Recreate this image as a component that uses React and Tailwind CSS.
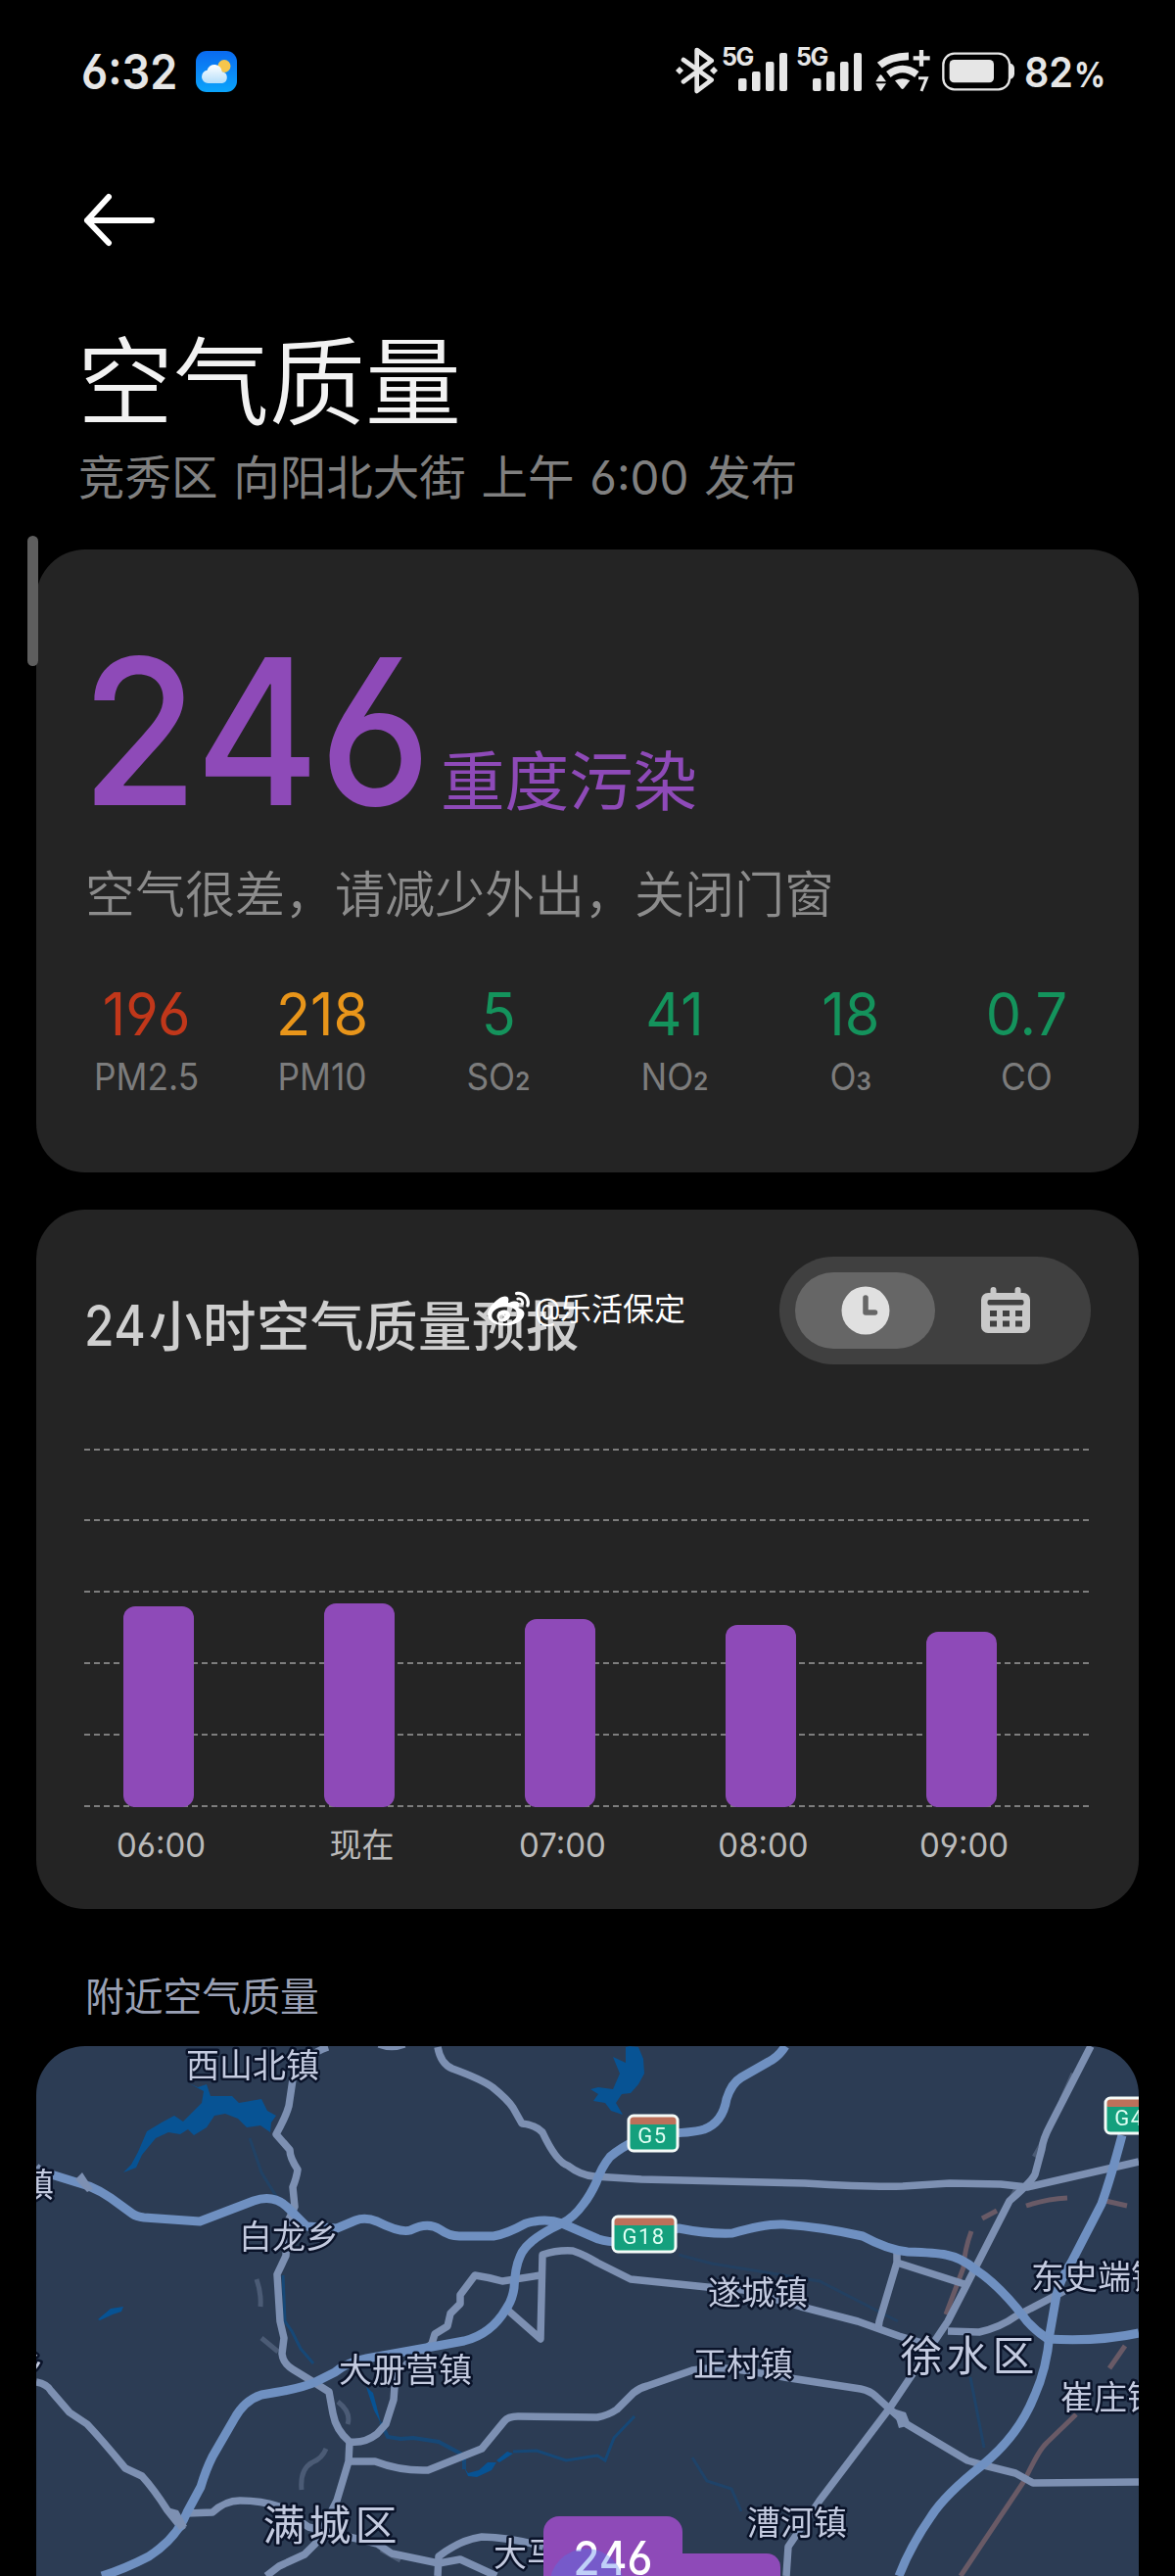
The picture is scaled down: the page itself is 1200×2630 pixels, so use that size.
import { FaWeibo } from "react-icons/fa";

const pollutants = [
  { value: "196", name: "PM2.5", color: "text-[#c1371a]" },
  { value: "218", name: "PM10", color: "text-[#e8951a]" },
  { value: "5", name: "SO", sub: "2", color: "text-[#14935c]" },
  { value: "41", name: "NO", sub: "2", color: "text-[#14935c]" },
  { value: "18", name: "O", sub: "3", color: "text-[#14935c]" },
  { value: "0.7", name: "CO", color: "text-[#14935c]" },
];

const forecast = [
  { time: "06:00", height: 205 },
  { time: "现在", height: 208 },
  { time: "07:00", height: 192 },
  { time: "08:00", height: 186 },
  { time: "09:00", height: 179 },
];

const gridLines = [1, 73, 146, 219, 292, 365];

// main and county roads
const roads = [
  "M298 1 Q275 8 262 34 L258 61 Q255 72 245 90 L259 106 Q259 114 267 126 Q266 134 262 144 L264 164 L256 181 L255 214 L246 233 L249 281 L253 298 L251 314 Q252 324 262 330 L280 341 L299 353 L303 375 Q306 392 320 404 Q335 406 348 396 L357 386 L365 361 L367 334 L404 304 L407 294 L420 286 L423 273 L433 263 L433 254 L448 234 Q462 236 476 240 L515 234",
  "M481 269 L515 299 L517 213 Q532 208 548 209 Q560 213 573 221 L607 238 L685 246 L722 249 L781 266 L839 281 L881 296 L915 306",
  "M320 404 L319 424 L307 464 L285 508 L274 519 L248 531 L235 541",
  "M319 424 L346 424 Q372 434 400 433 L455 411 L478 383 Q482 378 492 378 L573 379 Q584 377 593 371 L610 354 Q616 349 624 347 L670 331 Q696 326 722 331 L770 339 L842 350 Q852 352 858 358 L870 369 L889 386 L951 423 L968 428 L1000 436 L1018 446 L1126 445",
  "M410 1 Q413 18 425 23 Q455 34 466 42 Q482 55 487 63 L496 79 Q509 80 517 88 Q531 118 543 122 Q556 132 570 133 L618 136 L785 140 Q850 144 885 143 L933 140 L985 141 L1012 144 L1126 118",
  "M1077 0 L1036 80 Q1028 95 1027 105 L1020 131 Q1016 139 994 158 L948 248 L931 281 L872 369 L800 464 L768 511 L766 541",
  "M879 208 L879 221 L861 281 L860 288",
  "M879 221 L948 243",
  "M931 291 L963 292 Q985 287 1000 276 L1050 250",
  "M0 343 Q11 345 15 352 L34 374 L52 386 Q68 403 91 431 L108 439 Q120 452 134 474 L150 494",
  "M154 477 L180 476 Q193 464 208 464 Q230 464 248 470 L278 491 L348 508 L363 518 L411 528 L433 524 L470 541",
  "M410 541 L411 521 Q433 504 455 501 Q487 502 518 511",
  "M0 123 L10 133 M350 -2 Q363 3 376 -2",
];

const motorways = [
  "M12 130 L54 143 Q66 148 76 155 L98 171 Q102 174 110 175 L167 179 L222 158 Q242 151 256 164 L276 184 L307 186 L326 178 Q336 174 348 179 Q372 191 382 188 Q400 179 412 187 Q422 194 432 194 L467 194 Q480 192 500 181 Q520 175 537 181 L574 197 Q590 202 615 199 L656 186 Q686 192 711 191 Q745 181 763 182 Q805 185 844 194 Q870 208 890 210 Q920 211 929 213 Q945 216 959 228 Q985 245 1012 281 Q1021 291 1033 299 Q1085 302 1126 293",
  "M765 0 Q758 11 748 16 L720 32 Q710 38 705 54 Q701 78 682 85 Q668 89 640 89 Q610 93 586 113 Q577 124 572 139 Q566 152 559 161 Q549 175 537 181 Q500 198 494 215 Q489 226 488 247 Q486 260 480 268 Q465 294 437 301 L404 307 L337 319 Q317 323 305 333 L285 343 Q270 350 230 356 Q212 362 202 381 L180 419 Q173 433 168 450 L154 476 Q144 502 115 521 Q90 534 67 541",
  "M1109 91 Q1097 136 1088 161 L1057 221 Q1045 240 1042 254 L1035 294 Q1032 330 1019 358 Q1003 398 966 428 Q928 458 914 480 Q893 510 881 541",
];

const waters = [
  "M156 38 L165 42 L174 39 L178 51 L200 51 L207 58 L230 54 L236 66 L245 71 L240 78 L239 88 L229 81 L215 83 L206 74 L193 69 L182 71 L174 83 L161 91 L155 85 L147 90 L135 88 L122 94 L108 111 L102 124 L89 129 L97 121 L104 108 L113 87 L128 78 L141 71 L150 77 L169 58 L171 46 Z",
  "M602 1 L606 0 L615 1 L620 13 L621 28 L615 39 L607 48 L598 49 L592 58 L599 70 L587 66 L581 58 L569 56 L574 49 L566 44 L574 42 L589 44 L596 28 L589 11 L602 17 Z",
  "M63 279 L76 268 L89 266 L87 271 L78 274 L65 280 Z",
  "M337 348 L344 354 L352 385 L345 372 Z",
  "M437 430 L441 436 L452 433 L461 425 L470 425 L465 433 L450 440 L441 439 Z M470 423 L481 414 L487 416 L473 425 Z",
];

const places = [
  { name: "西山北镇", x: 221, y: 32, anchor: "middle" },
  { name: "镇", x: 1, y: 154, anchor: "middle" },
  { name: "白龙乡", x: 258, y: 207, anchor: "middle" },
  { name: "遂城镇", x: 737, y: 264, anchor: "middle" },
  { name: "东史端镇", x: 1016, y: 248, anchor: "start" },
  { name: "大册营镇", x: 377, y: 343, anchor: "middle" },
  { name: "正村镇", x: 722, y: 337, anchor: "middle" },
  { name: "崔庄镇", x: 1046, y: 371, anchor: "start" },
  { name: "乡", x: -9, y: 338, anchor: "middle" },
  { name: "大马", x: 467, y: 531, anchor: "start" },
  { name: "漕河镇", x: 777, y: 499, anchor: "middle" },
];

const districts = [
  { name: "徐水区", x: 953, y: 332 },
  { name: "满城区", x: 302, y: 505 },
];

const shields = [
  { name: "G5", x: 605, y: 71, w: 50 },
  { name: "G18", x: 589, y: 174, w: 64 },
  { name: "G4", x: 1092, y: 53, w: 50 },
];

function WeatherIcon() {
  return (
    <svg width="42" height="42" viewBox="0 0 42 42">
      <defs>
        <linearGradient id="sky" x1="0" y1="0" x2="0" y2="1">
          <stop offset="0" stopColor="#0a6af0" />
          <stop offset="1" stopColor="#0aa4fb" />
        </linearGradient>
        <linearGradient id="cloud" x1="0" y1="0" x2="0" y2="1">
          <stop offset="0" stopColor="#fff" />
          <stop offset="1" stopColor="#b4defa" />
        </linearGradient>
      </defs>
      <rect width="42" height="42" rx="11" fill="url(#sky)" />
      <circle cx="29" cy="15.500" r="6.500" fill="#f6c64c" />
      <path
        d="M12.500 33a6.700 6.700 0 0 1-1-13.300 7.800 7.800 0 0 1 15.300 1.500A6 6 0 0 1 27 33z"
        fill="url(#cloud)"
      />
    </svg>
  );
}

function BluetoothIcon() {
  return (
    <svg width="43" height="48" viewBox="58 56 129 144" fill="none">
      <path
        d="M82 95L168 157L123 191V65L168 98L82 162"
        stroke="#e6e6e6"
        strokeWidth="14"
        strokeLinecap="round"
        strokeLinejoin="round"
      />
      <path d="M70 116l12 12-12 12-12-12zM175 116l12 12-12 12-12-12z" fill="#e6e6e6" />
    </svg>
  );
}

function Signal() {
  return (
    <div className="flex h-[45px] w-[67px]">
      <span className="w-[17px] text-[25px] leading-[20px] font-bold tracking-[-1.500px]">5G</span>
      <svg width="50" height="45" viewBox="0 0 50 45" fill="#e6e6e6">
        <rect x="0" y="32" width="8.500" height="13" rx="2" />
        <rect x="14" y="25" width="8.500" height="20" rx="2" />
        <rect x="28" y="15" width="8.500" height="30" rx="2" />
        <rect x="42" y="6" width="8" height="39" rx="2" />
      </svg>
    </div>
  );
}

function WifiIcon() {
  return (
    <svg width="56" height="44" viewBox="671 60 168 132" fill="#e6e6e6">
      <path d="M684 110Q716 83 773 82" fill="none" stroke="#e6e6e6" strokeWidth="23" />
      <path d="M711 138Q754 105 798 138" fill="none" stroke="#e6e6e6" strokeWidth="22" />
      <path d="M731 157Q754 144 777 157L758 181Q754 185 750 181Z" />
      <path d="M672 160L684 140Q687 137 690 140L704 160ZM672 166H704L690 186Q687 190 684 186Z" />
      <path d="M812 63V113M787 88H838" stroke="#e6e6e6" strokeWidth="13" />
      <path d="M803 149H828L812 189" fill="none" stroke="#e6e6e6" strokeWidth="9" />
    </svg>
  );
}

function BatteryIcon() {
  return (
    <svg width="74" height="40" viewBox="876 68 222 120" fill="#e6e6e6">
      <rect x="880" y="73" width="203" height="110" rx="34" fill="none" stroke="#e6e6e6" strokeWidth="7" />
      <rect x="899" y="92" width="136" height="70" rx="14" />
      <path d="M1084 103q14 2 14 16v16q0 14-14 17z" />
    </svg>
  );
}

function StatusBar() {
  return (
    <div className="flex h-[146px] justify-between pl-[83px] pr-[73px] text-[#e6e6e6]">
      <div className="flex h-[146px] items-center">
        <span className="w-[117px] origin-left scale-x-[.92] pt-[2px] text-[49px] font-semibold">6:32</span>
        <WeatherIcon />
      </div>
      <div className="flex pt-[48px]">
        <BluetoothIcon />
        <div className="ml-[4px] mr-[1px] flex gap-[9px]">
          <Signal />
          <Signal />
        </div>
        <div className="ml-[13px] mt-[2px]">
          <WifiIcon />
        </div>
        <div className="ml-[12px] mt-[5px]">
          <BatteryIcon />
        </div>
        <div className="ml-[10px] flex w-[81px] items-baseline text-[43px] leading-[50px] font-semibold">
          <span className="w-[51px] origin-left scale-x-[.92]">82</span>
          <span className="origin-left scale-x-[.88] text-[36px] font-bold">%</span>
        </div>
      </div>
    </div>
  );
}

function AirQualityCard() {
  return (
    <section className="mx-[37px] h-[636px] rounded-[50px] bg-[#242424] pt-[81px] pr-[25px] pl-[23px]">
      <div className="flex h-[206px] items-baseline pl-[23px] text-[#8e4ab8]">
        <span className="w-[367px] origin-left scale-x-[.93] text-[208px] leading-[208px] font-[450]">246</span>
        <span className="text-[65.500px] leading-[80px]">重度污染</span>
      </div>
      <p className="mt-[26px] pl-[27px] text-[51px] leading-[80px] font-[350] text-[#8c8c8c]">
        空气很差，请减少外出，关闭门窗
      </p>
      <div className="mt-[43px] grid grid-cols-6">
        {pollutants.map(({ value, name, sub, color }) => (
          <div key={name} className="flex flex-col items-center">
            <span className={`scale-x-[.96] text-[60px] leading-[76px] ${color}`}>{value}</span>
            <span className="scale-x-[.93] text-[38px] leading-[52px] text-[#7c7c7c]">
              {name}
              {sub && <span className="text-[26px] font-semibold">{sub}</span>}
            </span>
          </div>
        ))}
      </div>
    </section>
  );
}

function Toggle() {
  return (
    <div className="flex h-[110px] w-[318px] items-center rounded-full bg-[#404040] px-[16px]">
      <div className="flex h-[78px] w-[143px] items-center justify-center rounded-full bg-[#666]">
        <svg width="50" height="50" viewBox="0 0 50 50">
          <circle cx="25" cy="25" r="24.500" fill="#e0e0e0" />
          <path d="M25 12V27H34.500" fill="none" stroke="#666" strokeWidth="5.500" strokeLinecap="round" strokeLinejoin="round" />
        </svg>
      </div>
      <div className="flex h-[78px] w-[143px] items-center justify-center">
        <svg width="50" height="48" viewBox="0 0 50 48">
          <rect x="0" y="6" width="50" height="41" rx="7" fill="#c9c9c9" />
          <path d="M12.500 3V9M37.500 3V9" stroke="#c9c9c9" strokeWidth="6" strokeLinecap="round" />
          <rect x="6.500" y="13" width="37" height="5.500" rx="2" fill="#404040" />
          <path d="M9 27H16M22 27H29M35 27H42M9 37.500H16M22 37.500H29M35 37.500H42" stroke="#404040" strokeWidth="6" />
        </svg>
      </div>
    </div>
  );
}

function ForecastCard() {
  return (
    <section className="relative mx-[37px] mt-[38px] h-[714px] rounded-[50px] bg-[#242424] px-[49px] pt-[48px]">
      <div className="flex h-[110px] items-start justify-between">
        <h2 className="flex items-baseline pt-[31px] text-[54.500px] leading-[80px] font-medium tracking-[.5px] text-[#cfcfcf]">
          <span className="w-[66px] origin-left scale-x-[.87] text-[57px]">24</span>
          小时空气质量预报
        </h2>
        <Toggle />
      </div>
      <svg className="mt-[86px]" width="1028" height="368" viewBox="0 0 1028 368">
        {gridLines.map((y) => (
          <line key={y} x1="0" x2="1026" y1={y} y2={y} stroke="#7d7d7d" strokeWidth="2" strokeDasharray="6 4" />
        ))}
        {forecast.map(({ time, height }, i) => (
          <rect key={time} x={40 + i * 205} y={366 - height} width="72" height={height} rx="12" fill="#8e4ab8" />
        ))}
      </svg>
      <div className="-ml-[24px] mt-[12px] flex text-[34px] leading-[50px] text-[#bababa]">
        {forecast.map(({ time }) => (
          <span key={time} className="w-[205px] shrink-0 scale-x-[.97] text-center">
            {time}
          </span>
        ))}
      </div>
      <div className="absolute left-[461px] top-[80px] flex items-center text-[32px] leading-[44px] text-white">
        <FaWeibo size={43} />
        <span className="ml-[5px] w-[26px] origin-left scale-x-[.85]">@</span>
        乐活保定
      </div>
    </section>
  );
}

function AirMap() {
  return (
    <div className="mx-[37px] h-[541px] overflow-hidden rounded-t-[50px] bg-[#2c3c54]">
      <svg width="1126" height="541" viewBox="0 0 1126 541" fontFamily="Inter, 'Noto Sans CJK SC', sans-serif">
        <g fill="#075394">
          {waters.map((d) => (
            <path key={d} d={d} />
          ))}
        </g>
        <g fill="none" stroke="#075394" strokeWidth="3" opacity=".55">
          <path d="M252 234L254 281L261 291L270 309L283 324" />
          <path d="M352 384L359 399L372 401L385 400L411 404L437 418V432" strokeWidth="4" />
          <path d="M487 414L511 413L541 423L573 418L581 423L590 400L611 378" />
          <path d="M218 94L230 129L248 158" opacity=".5" />
          <path d="M670 420L685 444L710 452L720 475" opacity=".6" />
          <path d="M954 338L968 410" opacity=".6" />
          <path d="M656 213L690 222L800 240L880 281" opacity=".4" />
        </g>
        <g fill="none" stroke="#4b5b75" strokeWidth="5">
          <path d="M1059 28L1030 94L994 158" strokeDasharray="30 34" />
          <path d="M225 238Q230 252 229 266M230 298L247 312M308 363Q322 374 318 386M296 411Q292 421 282 425Q269 432 271 453" />
          <path d="M352 514L372 525" />
        </g>
        <g fill="none" stroke="#695a66" strokeWidth="5">
          <path d="M966 176L981 168M1011 163Q1032 156 1053 155M1092 158L1114 163" />
          <path d="M955 189Q948 208 947 226L929 274" />
          <path d="M1112 306L1096 329M1062 376L1032 405Q1024 412 1009 444L944 541" />
        </g>
        <g fill="none" stroke="#7d90b2" strokeWidth="7.500" strokeLinejoin="round">
          {roads.map((d) => (
            <path key={d} d={d} />
          ))}
        </g>
        <g fill="none" stroke="#6f90c1" strokeWidth="9" strokeLinejoin="round">
          {motorways.map((d) => (
            <path key={d} d={d} />
          ))}
        </g>
        <path d="M130 470L145 474L154 490L146 494ZM875 370L888 374L893 387L881 390ZM47 129L58 146L52 149L40 136Z" fill="#7d90b2" />
        <g fill="#c3cadf" stroke="#0a1329" strokeWidth="5" strokeLinejoin="round" paintOrder="stroke">
          {places.map(({ name, x, y, anchor }) => (
            <text key={name + x} x={x} y={y} textAnchor={anchor} fontSize="34">
              {name}
            </text>
          ))}
          {districts.map(({ name, x, y }) => (
            <text key={name} x={x} y={y} textAnchor="middle" fontSize="43" letterSpacing="4">
              {name}
            </text>
          ))}
        </g>
        {shields.map(({ name, x, y, w }) => (
          <g key={name}>
            <rect x={x} y={y} width={w} height="36" rx="5" fill="#14a07d" />
            <rect x={x} y={y} width={w} height="9" rx="3" fill="#bd705a" />
            <rect x={x} y={y} width={w} height="36" rx="5" fill="none" stroke="#f5fbf8" strokeWidth="3" />
            <text x={x + w / 2 - 0.5} y={y + 28} textAnchor="middle" fontFamily="Roboto" fontSize="22" letterSpacing="1.500" fill="#dffff4">
              {name}
            </text>
          </g>
        ))}
        <rect x="600" y="518" width="160" height="60" rx="14" fill="#8e4ab8" />
        <rect x="518" y="480" width="142" height="90" rx="16" fill="#8e4ab8" />
        <text x="589" y="540" textAnchor="middle" fontSize="48" fontWeight="500" fill="#fff" textLength="81" lengthAdjust="spacingAndGlyphs">
          246
        </text>
        <circle cx="562" cy="551" r="38" fill="#4a78ea" opacity=".35" />
      </svg>
    </div>
  );
}

export default function App() {
  return (
    <div className="relative h-[2630px] w-[1200px] overflow-hidden bg-black font-[Inter,'Noto_Sans_CJK_SC',sans-serif] [font-feature-settings:'cv03','cv04']">
      <StatusBar />
      <header className="h-[415px] pt-[50px]">
        <svg className="ml-[84px]" width="76" height="56" viewBox="0 0 76 56" fill="none">
          <path d="M27 5L5 29L27 52M5 29H71" stroke="#fff" strokeWidth="6" strokeLinecap="round" strokeLinejoin="round" />
        </svg>
        <h1 className="ml-[79px] mt-[79px] text-[98px] leading-[120px] font-[350] text-[#f2f2f2]">空气质量</h1>
        <p className="ml-[80px] mt-[2px] text-[47.500px] leading-[70px] [word-spacing:2.400px] text-[#808080]">
          竞秀区 向阳北大街 上午 6:00 发布
        </p>
      </header>
      <AirQualityCard />
      <ForecastCard />
      <h3 className="ml-[87px] mt-[60px] h-[80px] text-[39.800px] leading-[60px] text-[#9aa1b5]">附近空气质量</h3>
      <AirMap />
      <div className="absolute left-[28px] top-[547px] h-[133px] w-[11px] rounded-full bg-[#5e5e5e]" />
    </div>
  );
}
